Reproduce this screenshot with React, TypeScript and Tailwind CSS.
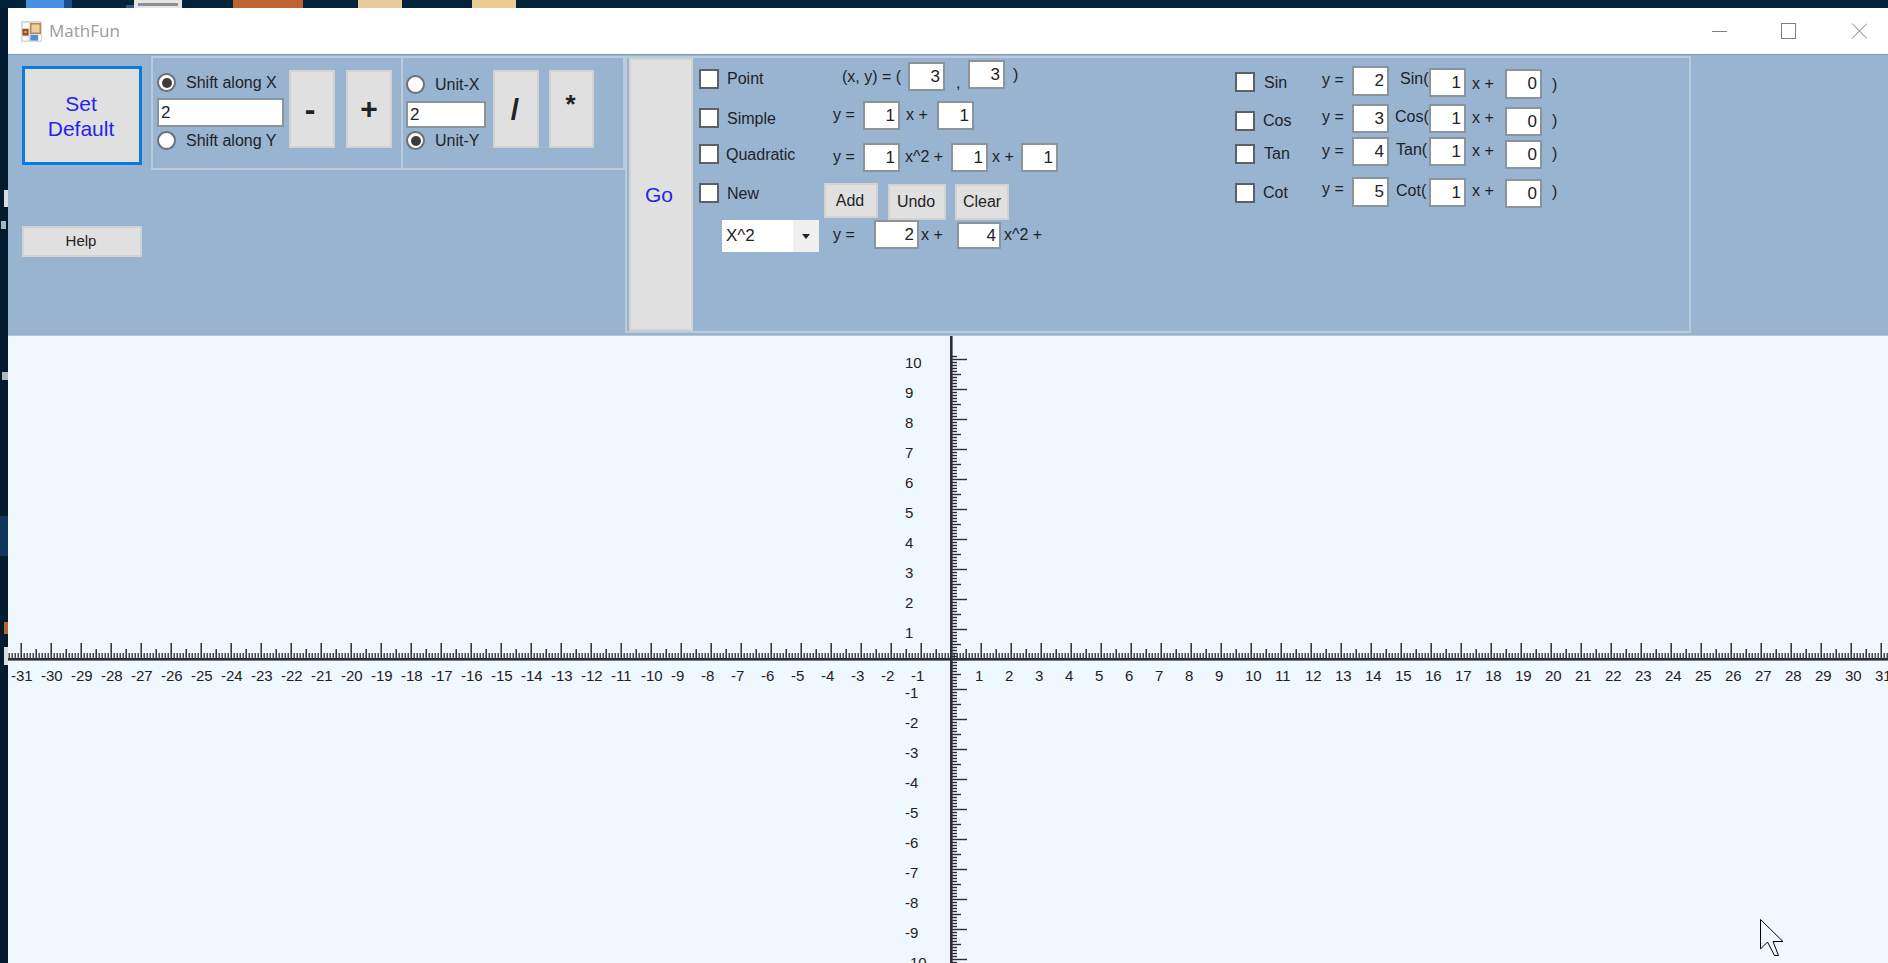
import { ReactNode } from 'react';

const X0 = 943; // origin inside the canvas svg
const Y0 = 323;
const LABEL_COLOR = '#1f2125';

function range(from: number, to: number) {
  return Array.from({ length: to - from + 1 }, (_, i) => from + i);
}

function Txt({ className = '', children }: { className?: string; children: ReactNode }) {
  return <div className={`h-[18px] shrink-0 whitespace-nowrap text-[16px] leading-[18px] text-[#1f2226] ${className}`}>{children}</div>;
}

function Field({ value, className = '' }: { value: string; className?: string }) {
  return (
    <div className={`flex shrink-0 items-center justify-end border-2 border-[#8b939b] bg-white pr-[3px] text-[17px] text-[#1f2226] ${className}`}>
      {value}
    </div>
  );
}

function Check({ className = '' }: { className?: string }) {
  return <div className={`h-[20px] w-[20px] shrink-0 border-2 border-[#5c6167] bg-white ${className}`} />;
}

function Radio({ on = false, className = '' }: { on?: boolean; className?: string }) {
  return (
    <div className={`flex h-[19px] w-[19px] shrink-0 items-center justify-center rounded-full border-2 border-[#6b7077] bg-white ${className}`}>
      {on && <div className="h-[10px] w-[10px] rounded-full bg-[#3a3c40]" />}
    </div>
  );
}

// text colour comes from the caller, Tailwind can't tell which of two text-* wins
function Btn({ className = '', children }: { className?: string; children: ReactNode }) {
  return (
    <div className={`flex shrink-0 items-center justify-center border-2 border-[#d2d2d2] bg-[#e0e0e0] ${className}`}>
      {children}
    </div>
  );
}

function AppIcon() {
  return (
    <svg width="21" height="21" viewBox="0 0 21 21" className="shrink-0">
      <rect width="21" height="21" fill="#d9d9d9" />
      <rect x="2" y="2" width="6" height="5" fill="#fff" />
      <rect x="9" y="2" width="11" height="11" fill="#b98a52" />
      <rect x="10.5" y="3.5" width="8" height="8" fill="#f3cd94" />
      <rect x="1.5" y="8" width="6" height="6.5" fill="#a2481c" />
      <rect x="3.5" y="10" width="2" height="2" fill="#f0c080" />
      <rect x="1.5" y="15.5" width="6" height="4" fill="#fff" />
      <rect x="9.5" y="14" width="7.5" height="5.5" fill="#4d8fdc" />
      <rect x="17.5" y="14" width="2.5" height="5.5" fill="#fff" />
    </svg>
  );
}

function Chart() {
  const xs = range(-315, 313).map(i => i * 3);
  const ys = range(-109, 101).map(i => i * 3);
  return (
    <svg width="1880" height="627" className="block">
      {xs.map(d => {
        const h = d % 30 === 0 ? 16 : d % 15 === 0 ? 10 : 6;
        const x = X0 + d + 0.2;
        if (x < 0) return null;
        return <line key={d} x1={x} x2={x} y1={Y0 - h} y2={Y0} stroke="#2c2e33" strokeWidth={d % 15 === 0 ? 1.5 : 1.3} />;
      })}
      {ys.map(d => {
        const w = d % 30 === 0 ? 16 : d % 15 === 0 ? 10 : 6;
        const y = Y0 - d + 0.5;
        return <line key={d} x1={X0} x2={X0 + w} y1={y} y2={y} stroke="#2c2e33" strokeWidth="1.4" />;
      })}
      <rect x="0" y={Y0 - 1} width="1880" height="2.6" fill="#2c2e33" />
      <rect x={X0 - 1} y="0" width="2.6" height="627" fill="#2c2e33" />
      <g fontFamily="'Liberation Sans', Arial, sans-serif" fontSize="15" fill={LABEL_COLOR}>
        {range(-31, 31).filter(n => n !== 0).map(n => (
          <text key={n} x={X0 + n * 30 + (n < 0 ? -10 : -6)} y={Y0 + 22}>{n}</text>
        ))}
        {range(-10, 10).filter(n => n !== 0).map(n => (
          <text key={n} x={X0 - 46} y={Y0 - n * 30 + 9}>{n}</text>
        ))}
      </g>
    </svg>
  );
}

function DesktopStrip() {
  return (
    <div className="flex h-[8px] shrink-0 bg-[#03233c]">
      <div className="ml-[26px] flex h-full w-[46px] justify-end bg-[#4a90e2]">
        <div className="h-full w-[8px] bg-[#1b4f86]" />
      </div>
      <div className="ml-[54px] mt-[5px] h-[3px] w-[8px] bg-[#2a5a90]" />
      <div className="flex h-full w-[48px] items-start justify-center bg-[#e4e4e0] pt-[3px]">
        <div className="h-[3px] w-[40px] bg-[#8d9094]" />
      </div>
      <div className="ml-[51px] h-full w-[70px] bg-[#bd6430]" />
      <div className="ml-[55px] h-full w-[44px] bg-[#e9cc9b]" />
      <div className="ml-[70px] h-full w-[44px] bg-[#eccb90]" />
    </div>
  );
}

function DesktopEdge() {
  return (
    <div className="flex w-[8px] shrink-0 flex-col bg-[#041a2e]">
      <div className="ml-[4px] mt-[182px] h-[17px] w-[4px] bg-[#d8dde2]" />
      <div className="ml-[1px] mt-[14px] h-[8px] w-[5px] bg-[#aab4be]" />
      <div className="ml-[2px] mt-[143px] h-[8px] w-[6px] bg-[#b0b8c0]" />
      <div className="mt-[136px] h-[40px] w-[8px] bg-[#12355c]" />
      <div className="ml-[4px] mt-[66px] h-[12px] w-[4px] bg-[#b5652b]" />
      <div className="ml-[4px] mt-[13px] h-[18px] w-[4px] bg-[#d8dde2]" />
    </div>
  );
}

export default function App() {
  return (
    <div className="flex h-[963px] w-[1888px] flex-col overflow-hidden bg-[#03233c] font-['Liberation_Sans',Arial,sans-serif]">
      <DesktopStrip />

      <div className="relative flex min-h-0 flex-1">
        <DesktopEdge />

        <div className="flex min-w-0 flex-1 flex-col">
          {/* Title bar */}
          <div className="flex h-[47px] shrink-0 items-center border-b border-[#7d97b3] bg-white">
            <div className="ml-[13px]"><AppIcon /></div>
            <span className="ml-[7px] font-['Open_Sans',sans-serif] text-[17px] text-[#9b9b9b]">MathFun</span>
            <svg width="155" height="16" viewBox="0 0 155 16" className="ml-auto mr-[21px]" fill="none" stroke="#7f7f7f" strokeWidth="1">
              <path d="M0 8.5H15" />
              <rect x="69.5" y="0.5" width="14" height="15" />
              <path d="M140 0.5L155 15.5M155 0.5L140 15.5" />
            </svg>
          </div>

          {/* Toolbar */}
          <div className="flex h-[281px] shrink-0 items-start border-b border-[#b4c6da] bg-[#99b4d1]">
            <div className="ml-[14px] mt-[11px] flex w-[120px] shrink-0 flex-col">
              <div className="flex h-[99px] flex-col items-center justify-center border-[3px] border-[#0a7bdc] bg-[#e0e0e0] pr-[2px] text-center text-[21px] leading-[25px] text-[#2424f0]">
                <span>Set</span>
                <span>Default</span>
              </div>
              <Btn className="mt-[61px] h-[31px] pr-[2px] text-[15px] text-[#1f2226]">Help</Btn>
            </div>

            {/* Shift along */}
            <div className="ml-[9px] mt-[1px] flex h-[114px] w-[252px] shrink-0 items-start border-2 border-[#bccada]">
              <div className="ml-[4px] mt-[15px] flex w-[127px] shrink-0 flex-col">
                <div className="flex items-center">
                  <Radio on />
                  <Txt className="ml-[10px]">Shift along X</Txt>
                </div>
                <div className="mt-[6px] flex h-[29px] items-center border-2 border-[#8b939b] bg-white pl-[2px] text-[17px] text-[#1f2226]">2</div>
                <div className="mt-[4px] flex items-center">
                  <Radio />
                  <Txt className="ml-[10px]">Shift along Y</Txt>
                </div>
              </div>
              <Btn className="ml-[5px] mt-[12px] h-[78px] w-[46px] pr-[4px] text-[32px] font-bold text-[#1f2226]">-</Btn>
              <Btn className="ml-[11px] mt-[12px] h-[78px] w-[46px] pb-[2px] text-[30px] font-bold text-[#1f2226]">+</Btn>
            </div>

            {/* Unit */}
            <div className="mt-[1px] flex h-[114px] w-[222px] shrink-0 items-start border-y-2 border-r-2 border-[#bccada]">
              <div className="ml-[3px] mt-[17px] flex w-[80px] shrink-0 flex-col">
                <div className="flex items-center">
                  <Radio />
                  <Txt className="ml-[10px]">Unit-X</Txt>
                </div>
                <div className="mt-[7px] flex h-[27px] items-center border-2 border-[#8b939b] bg-white pl-[2px] text-[17px] text-[#1f2226]">2</div>
                <div className="mt-[3px] flex items-center">
                  <Radio on />
                  <Txt className="ml-[10px]">Unit-Y</Txt>
                </div>
              </div>
              <Btn className="ml-[7px] mt-[12px] h-[78px] w-[46px] pr-[2px] text-[30px] font-bold text-[#1f2226]">/</Btn>
              <Btn className="ml-[10px] mt-[12px] h-[78px] w-[45px] items-start pr-[2px] pt-[13px] text-[26px] font-bold text-[#1f2226]">*</Btn>
            </div>

            {/* Functions */}
            <div className="mt-[1px] flex h-[277px] w-[1066px] shrink-0 border-2 border-[#bccada]">
              <Btn className="ml-[2px] h-full w-[64px] pr-[4px] text-[21px] text-[#2424f0]">Go</Btn>

              <div className="flex w-[542px] shrink-0 flex-col pt-[2px]">
                <div className="flex h-[40px] items-start">
                  <Check className="ml-[6px] mt-[9px]" />
                  <Txt className="ml-[8px] mt-[10px] w-[115px]">Point</Txt>
                  <Txt className="mt-[8px] w-[66px]">(x, y) = (</Txt>
                  <Field value="3" className="mt-[2px] h-[29px] w-[37px]" />
                  <Txt className="ml-[11px] mt-[14px] w-[12px]">,</Txt>
                  <Field value="3" className="h-[29px] w-[37px]" />
                  <Txt className="ml-[8px] mt-[6px]">)</Txt>
                </div>
                <div className="flex h-[42px] items-start">
                  <Check className="ml-[6px] mt-[8px]" />
                  <Txt className="ml-[8px] mt-[10px] w-[106px]">Simple</Txt>
                  <Txt className="mt-[6px] w-[30px]">y =</Txt>
                  <Field value="1" className="mt-[1px] h-[29px] w-[37px]" />
                  <Txt className="ml-[6px] mt-[6px] w-[31px]">x +</Txt>
                  <Field value="1" className="mt-[1px] h-[29px] w-[37px]" />
                </div>
                <div className="flex h-[41px] items-start">
                  <Check className="ml-[6px] mt-[2px]" />
                  <Txt className="ml-[7px] mt-[4px] w-[107px]">Quadratic</Txt>
                  <Txt className="mt-[6px] w-[30px]">y =</Txt>
                  <Field value="1" className="mt-[1px] h-[29px] w-[37px]" />
                  <Txt className="ml-[5px] mt-[6px] w-[46px]">x^2 +</Txt>
                  <Field value="1" className="mt-[1px] h-[29px] w-[37px]" />
                  <Txt className="ml-[4px] mt-[6px] w-[29px]">x +</Txt>
                  <Field value="1" className="mt-[1px] h-[29px] w-[37px]" />
                </div>
                <div className="flex h-[37px] items-start">
                  <Check className="ml-[6px]" />
                  <Txt className="ml-[8px] mt-[2px] w-[97px]">New</Txt>
                  <Btn className="h-[35px] w-[54px] pr-[2px] text-[16px] text-[#1f2226]">Add</Btn>
                  <Btn className="ml-[10px] mt-[1px] h-[36px] w-[58px] pr-[2px] text-[16px] text-[#1f2226]">Undo</Btn>
                  <Btn className="ml-[9px] mt-[1px] h-[36px] w-[54px] text-[16px] text-[#1f2226]">Clear</Btn>
                </div>
                <div className="flex items-start">
                  <div className="ml-[29px] flex h-[32px] w-[97px] shrink-0 bg-white text-[17px] text-[#1f2226]">
                    <span className="flex-1 self-center pl-[4px]">X^2</span>
                    <div className="flex w-[26px] items-center justify-center bg-[#f0f0f0]">
                      <svg width="8" height="5" viewBox="0 0 8 5"><path d="M0 0H8L4 5Z" fill="#222" /></svg>
                    </div>
                  </div>
                  <Txt className="ml-[14px] mt-[6px] w-[41px]">y =</Txt>
                  <Field value="2" className="h-[29px] w-[45px]" />
                  <Txt className="ml-[2px] mt-[6px] w-[36px]">x +</Txt>
                  <Field value="4" className="mt-[2px] h-[27px] w-[44px]" />
                  <Txt className="ml-[3px] mt-[6px]">x^2 +</Txt>
                </div>
              </div>

              <div className="flex shrink-0 flex-col pt-[8px]">
                <div className="flex h-[38px] items-start">
                  <Check className="mt-[6px]" />
                  <Txt className="ml-[9px] mt-[8px] w-[58px]">Sin</Txt>
                  <Txt className="mt-[5px] w-[30px]">y =</Txt>
                  <Field value="2" className="h-[30px] w-[37px]" />
                  <Txt className="ml-[11px] mt-[4px] w-[29px]">Sin(</Txt>
                  <Field value="1" className="mt-[2px] h-[29px] w-[37px]" />
                  <Txt className="ml-[6px] mt-[9px] w-[33px]">x +</Txt>
                  <Field value="0" className="mt-[3px] h-[30px] w-[37px]" />
                  <Txt className="ml-[10px] mt-[10px]">)</Txt>
                </div>
                <div className="flex h-[33px] items-start">
                  <Check className="mt-[7px]" />
                  <Txt className="ml-[8px] mt-[8px] w-[59px]">Cos</Txt>
                  <Txt className="mt-[4px] w-[30px]">y =</Txt>
                  <Field value="3" className="h-[29px] w-[37px]" />
                  <Txt className="ml-[6px] mt-[4px] w-[34px]">Cos(</Txt>
                  <Field value="1" className="h-[29px] w-[37px]" />
                  <Txt className="ml-[6px] mt-[5px] w-[33px]">x +</Txt>
                  <Field value="0" className="mt-[3px] h-[29px] w-[37px]" />
                  <Txt className="ml-[10px] mt-[8px]">)</Txt>
                </div>
                <div className="flex h-[40px] items-start">
                  <Check className="mt-[7px]" />
                  <Txt className="ml-[9px] mt-[8px] w-[58px]">Tan</Txt>
                  <Txt className="mt-[5px] w-[30px]">y =</Txt>
                  <Field value="4" className="h-[29px] w-[37px]" />
                  <Txt className="ml-[7px] mt-[4px] w-[33px]">Tan(</Txt>
                  <Field value="1" className="h-[29px] w-[37px]" />
                  <Txt className="ml-[6px] mt-[5px] w-[33px]">x +</Txt>
                  <Field value="0" className="mt-[3px] h-[29px] w-[37px]" />
                  <Txt className="ml-[10px] mt-[8px]">)</Txt>
                </div>
                <div className="flex items-start">
                  <Check className="mt-[6px]" />
                  <Txt className="ml-[8px] mt-[7px] w-[59px]">Cot</Txt>
                  <Txt className="mt-[3px] w-[30px]">y =</Txt>
                  <Field value="5" className="h-[30px] w-[37px]" />
                  <Txt className="ml-[7px] mt-[5px] w-[33px]">Cot(</Txt>
                  <Field value="1" className="mt-[1px] h-[29px] w-[37px]" />
                  <Txt className="ml-[6px] mt-[5px] w-[33px]">x +</Txt>
                  <Field value="0" className="mt-[2px] h-[29px] w-[37px]" />
                  <Txt className="ml-[10px] mt-[6px]">)</Txt>
                </div>
              </div>
            </div>
          </div>

          {/* Drawing surface */}
          <div className="min-h-0 flex-1 overflow-hidden bg-[#f0f8ff]">
            <Chart />
          </div>
        </div>

        {/* Mouse pointer over the window */}
        <svg width="24" height="38" viewBox="0 0 24 38" className="absolute left-[1760px] top-[911px]">
          <path d="M0.5 0.5V30L7.5 23L14.5 36.5H18.5L13 22.5H23Z" fill="#f0f8ff" stroke="#000" strokeWidth="1" />
        </svg>
      </div>
    </div>
  );
}
